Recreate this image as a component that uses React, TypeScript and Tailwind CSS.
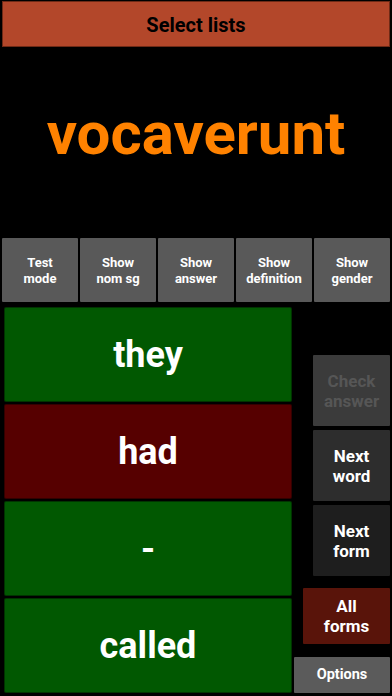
import * as React from "react";

const toggles = [
  ["Test", "mode"],
  ["Show", "nom sg"],
  ["Show", "answer"],
  ["Show", "definition"],
  ["Show", "gender"],
];

const forms = [
  { text: "they", bg: "bg-[#015801]" },
  { text: "had", bg: "bg-[#560000]" },
  { text: "-", bg: "bg-[#015801]" },
  { text: "called", bg: "bg-[#015801]" },
];

export default function App() {
  return (
    <div className="flex h-[696px] w-[392px] flex-col overflow-hidden bg-black font-['Roboto',sans-serif] font-bold">
      <button className="mx-[2px] mt-[1px] flex h-[46px] items-center justify-center border border-[#6e2a16] bg-[#b3472a] pt-[2px] text-[20px] text-black">
        Select lists
      </button>

      <div className="flex h-[191px] items-center justify-center pb-[18px]">
        <h1 className="text-[60px] leading-none text-[#ff8200]">vocaverunt</h1>
      </div>

      <div className="flex h-[64px] gap-[2px] px-[2px]">
        {toggles.map(([a, b]) => (
          <button
            key={a + b}
            className="flex flex-1 flex-col items-center justify-center rounded-[1px] bg-[#595959] pt-[2px] text-[13px] leading-[16px] text-white"
          >
            <span>{a}</span>
            <span>{b}</span>
          </button>
        ))}
      </div>

      <div className="flex flex-1 pl-[4px] pt-[5px] pr-[2px] pb-[2px]">
        <div className="flex w-[288px] flex-col gap-[2px]">
          {forms.map((f) => (
            <div
              key={f.text}
              className={`flex h-[95px] items-center justify-center rounded-[2px] border border-black/40 ${f.bg} text-[36px] text-white`}
            >
              {f.text}
            </div>
          ))}
        </div>

        <div className="flex flex-1 flex-col items-end justify-end pb-[1px]">
          <button className="flex h-[71px] w-[77px] flex-col items-center justify-center rounded-[1px] bg-[#3b3b3b] text-[17px] leading-[20px] text-[#565656]">
            <span>Check</span>
            <span>answer</span>
          </button>
          <button className="mt-[4px] flex h-[71px] w-[77px] flex-col items-center justify-center rounded-[1px] bg-[#2d2d2d] text-[17px] leading-[20px] text-white">
            <span>Next</span>
            <span>word</span>
          </button>
          <button className="mt-[4px] flex h-[71px] w-[77px] flex-col items-center justify-center rounded-[1px] bg-[#1e1e1e] text-[17px] leading-[20px] text-white">
            <span>Next</span>
            <span>form</span>
          </button>
          <button className="mt-[12px] flex h-[56px] w-[87px] flex-col items-center justify-center rounded-[1px] bg-[#59140a] text-[17px] leading-[20px] text-white">
            <span>All</span>
            <span>forms</span>
          </button>
          <button className="mt-[13px] flex h-[36px] w-[96px] items-center justify-center rounded-[1px] bg-[#5b5b5b] text-[14.5px] text-white">
            Options
          </button>
        </div>
      </div>
    </div>
  );
}
